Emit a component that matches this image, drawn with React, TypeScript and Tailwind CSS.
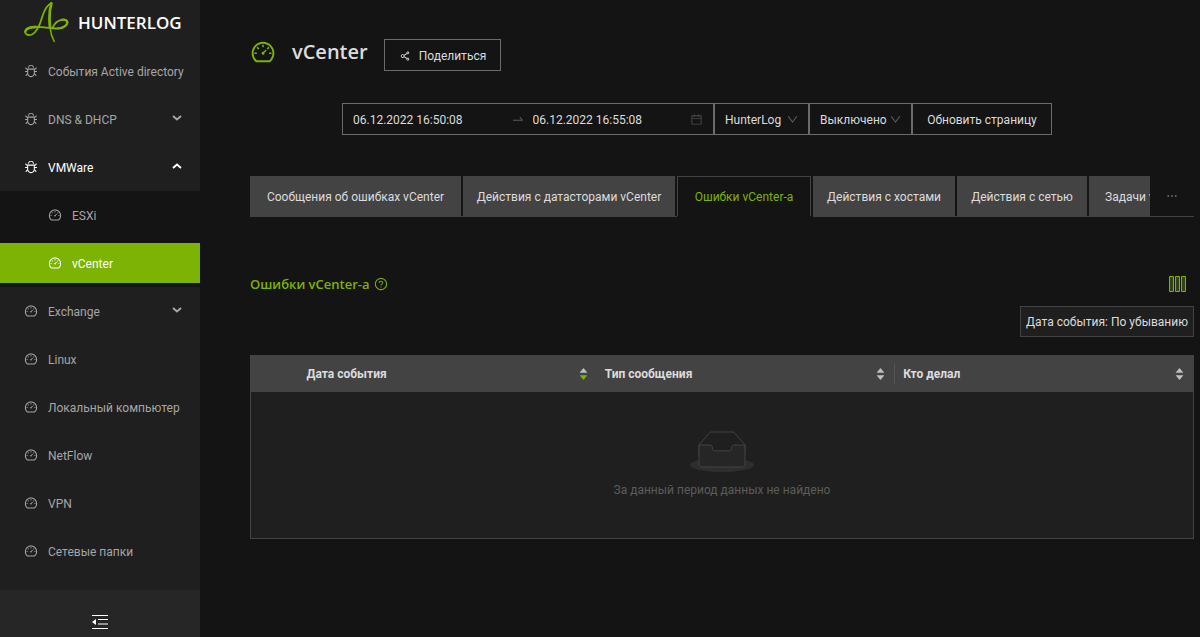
import type { ReactNode } from 'react';
import {
  AiOutlineBug,
  AiOutlineCalendar,
  AiOutlineDashboard,
  AiOutlineDown,
  AiOutlineEllipsis,
  AiOutlineQuestionCircle,
  AiOutlineShareAlt,
  AiOutlineSwapRight,
  AiFillCaretDown,
  AiFillCaretUp,
} from 'react-icons/ai';

function Logo() {
  return (
    <svg width="46" height="42" viewBox="0 0 46 42" fill="none" stroke="#7db305" strokeLinecap="round" aria-hidden="true">
      <path d="M27.500 1C22.500 3 20.500 8 18.500 14C16.500 21 13.500 30 8 32.500C4.500 34 .8 32.500 1.200 29.500C1.800 25.500 8 24.500 14 24.800C22 25.200 29 27.500 36 26.200C41.500 25 44.500 21.500 43 18.800C41 16 32 17.500 29 25" strokeWidth="1.800" />
      <path d="M1.300 29.500C2 26.800 6 25.300 12 25" strokeWidth="2.400" />
      <path d="M38 17.800C43 17.300 45 20.500 41.500 23.800C39.500 25.600 36.500 26.400 33.500 26.500" strokeWidth="2.200" />
      <path d="M27.300 1.500C25.500 8 25.200 18 26 25" strokeWidth="2.800" />
      <path d="M26 25C26.500 31 27.800 35 30.200 39.500" strokeWidth="1.500" />
    </svg>
  );
}

function Chevron({ up = false }: { up?: boolean }) {
  return (
    <svg width="10" height="6" viewBox="0 0 10 6" fill="none" stroke="currentColor" strokeWidth="2" className="mb-0.5 ml-auto" aria-hidden="true">
      <path d={up ? 'M1 5L5 1.500L9 5' : 'M1 1L5 4.500L9 1'} />
    </svg>
  );
}

function MenuItem({ icon, label, chevron, className = '' }: { icon: ReactNode; label: string; chevron?: 'up' | 'down'; className?: string }) {
  return (
    <li>
      <a href="#" className={`flex h-10 items-center gap-2.5 whitespace-nowrap pr-4.5 ${className}`}>
        {icon}
        <span className="pt-0.5">{label}</span>
        {chevron && <Chevron up={chevron === 'up'} />}
      </a>
    </li>
  );
}

const bug = <AiOutlineBug size={14} className="shrink-0" />;
const gauge = <AiOutlineDashboard size={14} className="shrink-0" />;

function Sidebar() {
  return (
    <aside className="flex w-50 shrink-0 flex-col bg-[#1f1f1f] text-[#a6a6a6]">
      <a href="#" className="flex h-[46px] items-center gap-2 pl-6 font-['Open_Sans','Noto_Sans',sans-serif] text-[17px] font-semibold text-white">
        <Logo />
        <span>HUNTERLOG</span>
      </a>
      <nav className="grow pt-[5px]">
        <ul className="flex flex-col gap-2">
          <MenuItem icon={bug} label="События Active directory" className="pl-6" />
          <MenuItem icon={bug} label="DNS & DHCP" chevron="down" className="pl-6" />
          <li>
            <a href="#" className="flex h-11 items-center gap-2.5 pb-1 pr-4.5 pl-6 text-white">
              {bug}
              <span className="pt-0.5">VMWare</span>
              <Chevron up />
            </a>
            <ul className="flex flex-col gap-2 bg-[#141414] pt-1 pb-1">
              <MenuItem icon={gauge} label="ESXi" className="pl-12" />
              <MenuItem icon={gauge} label="vCenter" className="bg-[#7db305] pl-12 text-white" />
            </ul>
          </li>
          <MenuItem icon={gauge} label="Exchange" chevron="down" className="-mt-1 pl-6" />
          <MenuItem icon={gauge} label="Linux" className="pl-6" />
          <MenuItem icon={gauge} label="Локальный компьютер" className="pl-6" />
          <MenuItem icon={gauge} label="NetFlow" className="pl-6" />
          <MenuItem icon={gauge} label="VPN" className="pl-6" />
          <MenuItem icon={gauge} label="Сетевые папки" className="pl-6" />
        </ul>
      </nav>
      <button type="button" aria-label="Свернуть меню" className="flex h-[47px] shrink-0 justify-center bg-[#262626] pt-6 text-white">
        <svg width="16" height="16" viewBox="0 0 16 16" fill="currentColor" aria-hidden="true">
          <path d="M0 1h16v1H0zM6 5h10v1H6zM6 9.500h10v1H6zM0 14h16v1H0zM0 8l4-3v6z" />
        </svg>
      </button>
    </aside>
  );
}

function PickerSelect({ label, value, className }: { label: string; value: string; className: string }) {
  return (
    <div className={`relative ${className}`}>
      <select aria-label={label} className="h-8 w-full appearance-none border border-[#6b6b6b] bg-transparent pt-0.5 pl-2.5">
        <option>{value}</option>
      </select>
      <AiOutlineDown size={13} className="pointer-events-none absolute top-2.5 right-2.5 text-[#5c5c5c]" />
    </div>
  );
}

function Filters() {
  return (
    <form className="mt-8 flex justify-center">
      <div className="flex h-8 w-93 items-center border border-[#6b6b6b] px-2.5">
        <input aria-label="Начало периода" defaultValue="06.12.2022 16:50:08" className="w-0 grow bg-transparent pt-0.5 outline-none" />
        <AiOutlineSwapRight size={14} className="mr-2 shrink-0 text-[#5c5c5c]" />
        <input aria-label="Конец периода" defaultValue="06.12.2022 16:55:08" className="w-0 grow bg-transparent pt-0.5 outline-none" />
        <AiOutlineCalendar size={13} className="shrink-0 text-[#4a4a4a]" />
      </div>
      <PickerSelect label="Источник" value="HunterLog" className="w-[95px]" />
      <PickerSelect label="Автообновление" value="Выключено" className="w-[103px]" />
      <button type="button" className="h-8 w-35 border border-[#6b6b6b] pt-0.5">Обновить страницу</button>
    </form>
  );
}

const tabs = [
  { label: 'Сообщения об ошибках vCenter', width: 'w-[211px]' },
  { label: 'Действия с датасторами vCenter', width: 'w-[212px]' },
  { label: 'Ошибки vCenter-a', width: 'w-[134px]', active: true },
  { label: 'Действия с хостами', width: 'w-[142px]' },
  { label: 'Действия с сетью', width: 'w-[130px]' },
  { label: 'Задачи vCenter', width: 'w-[117px]' },
];

function Tabs() {
  return (
    <div className="mt-[41px] flex">
      <div role="tablist" className="flex w-0 max-w-225 grow overflow-hidden">
        {tabs.map((tab) => (
          <div key={tab.label} className={`shrink-0 border-b pr-0.5 ${tab.active ? 'border-transparent' : 'border-[#434343]'}`}>
            <button
              type="button"
              role="tab"
              aria-selected={!!tab.active}
              className={`h-10 whitespace-nowrap border border-b-0 border-[#434343] ${tab.width} ${tab.active ? 'text-[#7db305]' : 'bg-[#434343]'}`}
            >
              {tab.label}
            </button>
          </div>
        ))}
      </div>
      <div className="flex w-11 items-center justify-center border-b border-[#434343]">
        <button type="button" aria-label="Ещё вкладки" className="text-[#a6a6a6]">
          <AiOutlineEllipsis size={14} />
        </button>
      </div>
    </div>
  );
}

function Sorter({ descending = false }: { descending?: boolean }) {
  return (
    <span className="flex flex-col text-[#bfbfbf]">
      <AiFillCaretUp size={11} className="-mb-1" />
      <AiFillCaretDown size={11} className={descending ? 'text-[#7db305]' : ''} />
    </span>
  );
}

function HeaderCell({ label, descending, divider }: { label: string; descending?: boolean; divider?: boolean }) {
  return (
    <th scope="col" aria-sort={descending ? 'descending' : 'none'} className="p-0 font-bold">
      <button type="button" className="flex h-9 w-full items-center">
        <span className={`flex h-5 grow items-center justify-between pr-2 pl-2 ${divider ? 'border-r border-[#555555]' : ''}`}>
          {label}
          <Sorter descending={descending} />
        </span>
      </button>
    </th>
  );
}

function EmptyBox() {
  return (
    <svg width="64" height="41" viewBox="0 0 64 41" aria-hidden="true">
      <g transform="translate(0 1)" fill="none" fillRule="evenodd">
        <ellipse fill="#2e2e2e" cx="32" cy="33" rx="32" ry="7" />
        <g fillRule="nonzero" stroke="#434343">
          <path fill="#1f1f1f" d="M55 12.760L44.854 1.258C44.367.474 43.656 0 42.907 0H21.093c-.749 0-1.460.474-1.947 1.257L9 12.761V22h46v-9.240z" />
          <path fill="#262626" d="M41.613 15.931c0-1.605.994-2.930 2.227-2.931H55v18.137C55 33.260 53.680 35 52.050 35h-40.100C10.320 35 9 33.259 9 31.137V13h11.160c1.233 0 2.227 1.323 2.227 2.928v.022c0 1.605 1.005 2.901 2.237 2.901h14.752c1.232 0 2.237-1.308 2.237-2.913v-.007z" />
        </g>
      </g>
    </svg>
  );
}

function EventsTable() {
  return (
    <table className="mt-[18px] w-full table-fixed border-collapse border border-[#434343] text-left">
      <colgroup>
        <col className="w-12" />
        <col />
        <col />
        <col />
      </colgroup>
      <thead className="bg-[#434343]">
        <tr>
          <td />
          <HeaderCell label="Дата события" descending />
          <HeaderCell label="Тип сообщения" divider />
          <HeaderCell label="Кто делал" />
        </tr>
      </thead>
      <tbody>
        <tr>
          <td colSpan={4} className="h-[146px] bg-[#1f1f1f] p-0 text-[#5c5c5c]">
            <div className="flex flex-col items-center gap-2 pt-0.5">
              <EmptyBox />
              <p>За данный период данных не найдено</p>
            </div>
          </td>
        </tr>
      </tbody>
    </table>
  );
}

export default function App() {
  return (
    <div className="flex min-h-screen bg-[#141414] font-['Roboto','Noto_Sans',sans-serif] text-[12px] leading-5 text-[#dcdcdc]">
      <Sidebar />
      <main className="min-w-0 grow pr-1.5">
        <header className="flex items-center pt-[39px] pl-[50px]">
          <AiOutlineDashboard size={26} className="mb-1.5 text-[#7db305]" />
          <h1 className="ml-4 pb-1.5 font-['Open_Sans','Noto_Sans',sans-serif] text-[20px] leading-6 font-semibold">vCenter</h1>
          <button type="button" className="ml-4 flex h-8 items-center gap-2 border border-[#6b6b6b] px-[14px] pt-0.5">
            <AiOutlineShareAlt size={12} />
            Поделиться
          </button>
        </header>
        <Filters />
        <section className="pl-[50px]">
          <Tabs />
          <div className="mt-[57px] flex h-5 items-center justify-between text-[#7db305]">
            <h2 className="flex items-center gap-1 font-['Open_Sans','Noto_Sans',sans-serif] text-[13px] font-semibold">
              Ошибки vCenter-a
              <AiOutlineQuestionCircle size={14} />
            </h2>
            <button type="button" aria-label="Столбцы" className="mr-2">
              <svg width="17" height="16" viewBox="0 0 17 16" fill="#31460a" stroke="#7db305" aria-hidden="true">
                <path d="M.5.5h4v15h-4zM6.500.5h4v15h-4zM12.500.5h4v15h-4z" />
              </svg>
            </button>
          </div>
          <div className="mt-3 flex justify-end">
            <button type="button" className="h-[31px] border border-[#434343] bg-[#1f1f1f] px-[5px]">Дата события: По убыванию</button>
          </div>
          <EventsTable />
        </section>
      </main>
    </div>
  );
}
